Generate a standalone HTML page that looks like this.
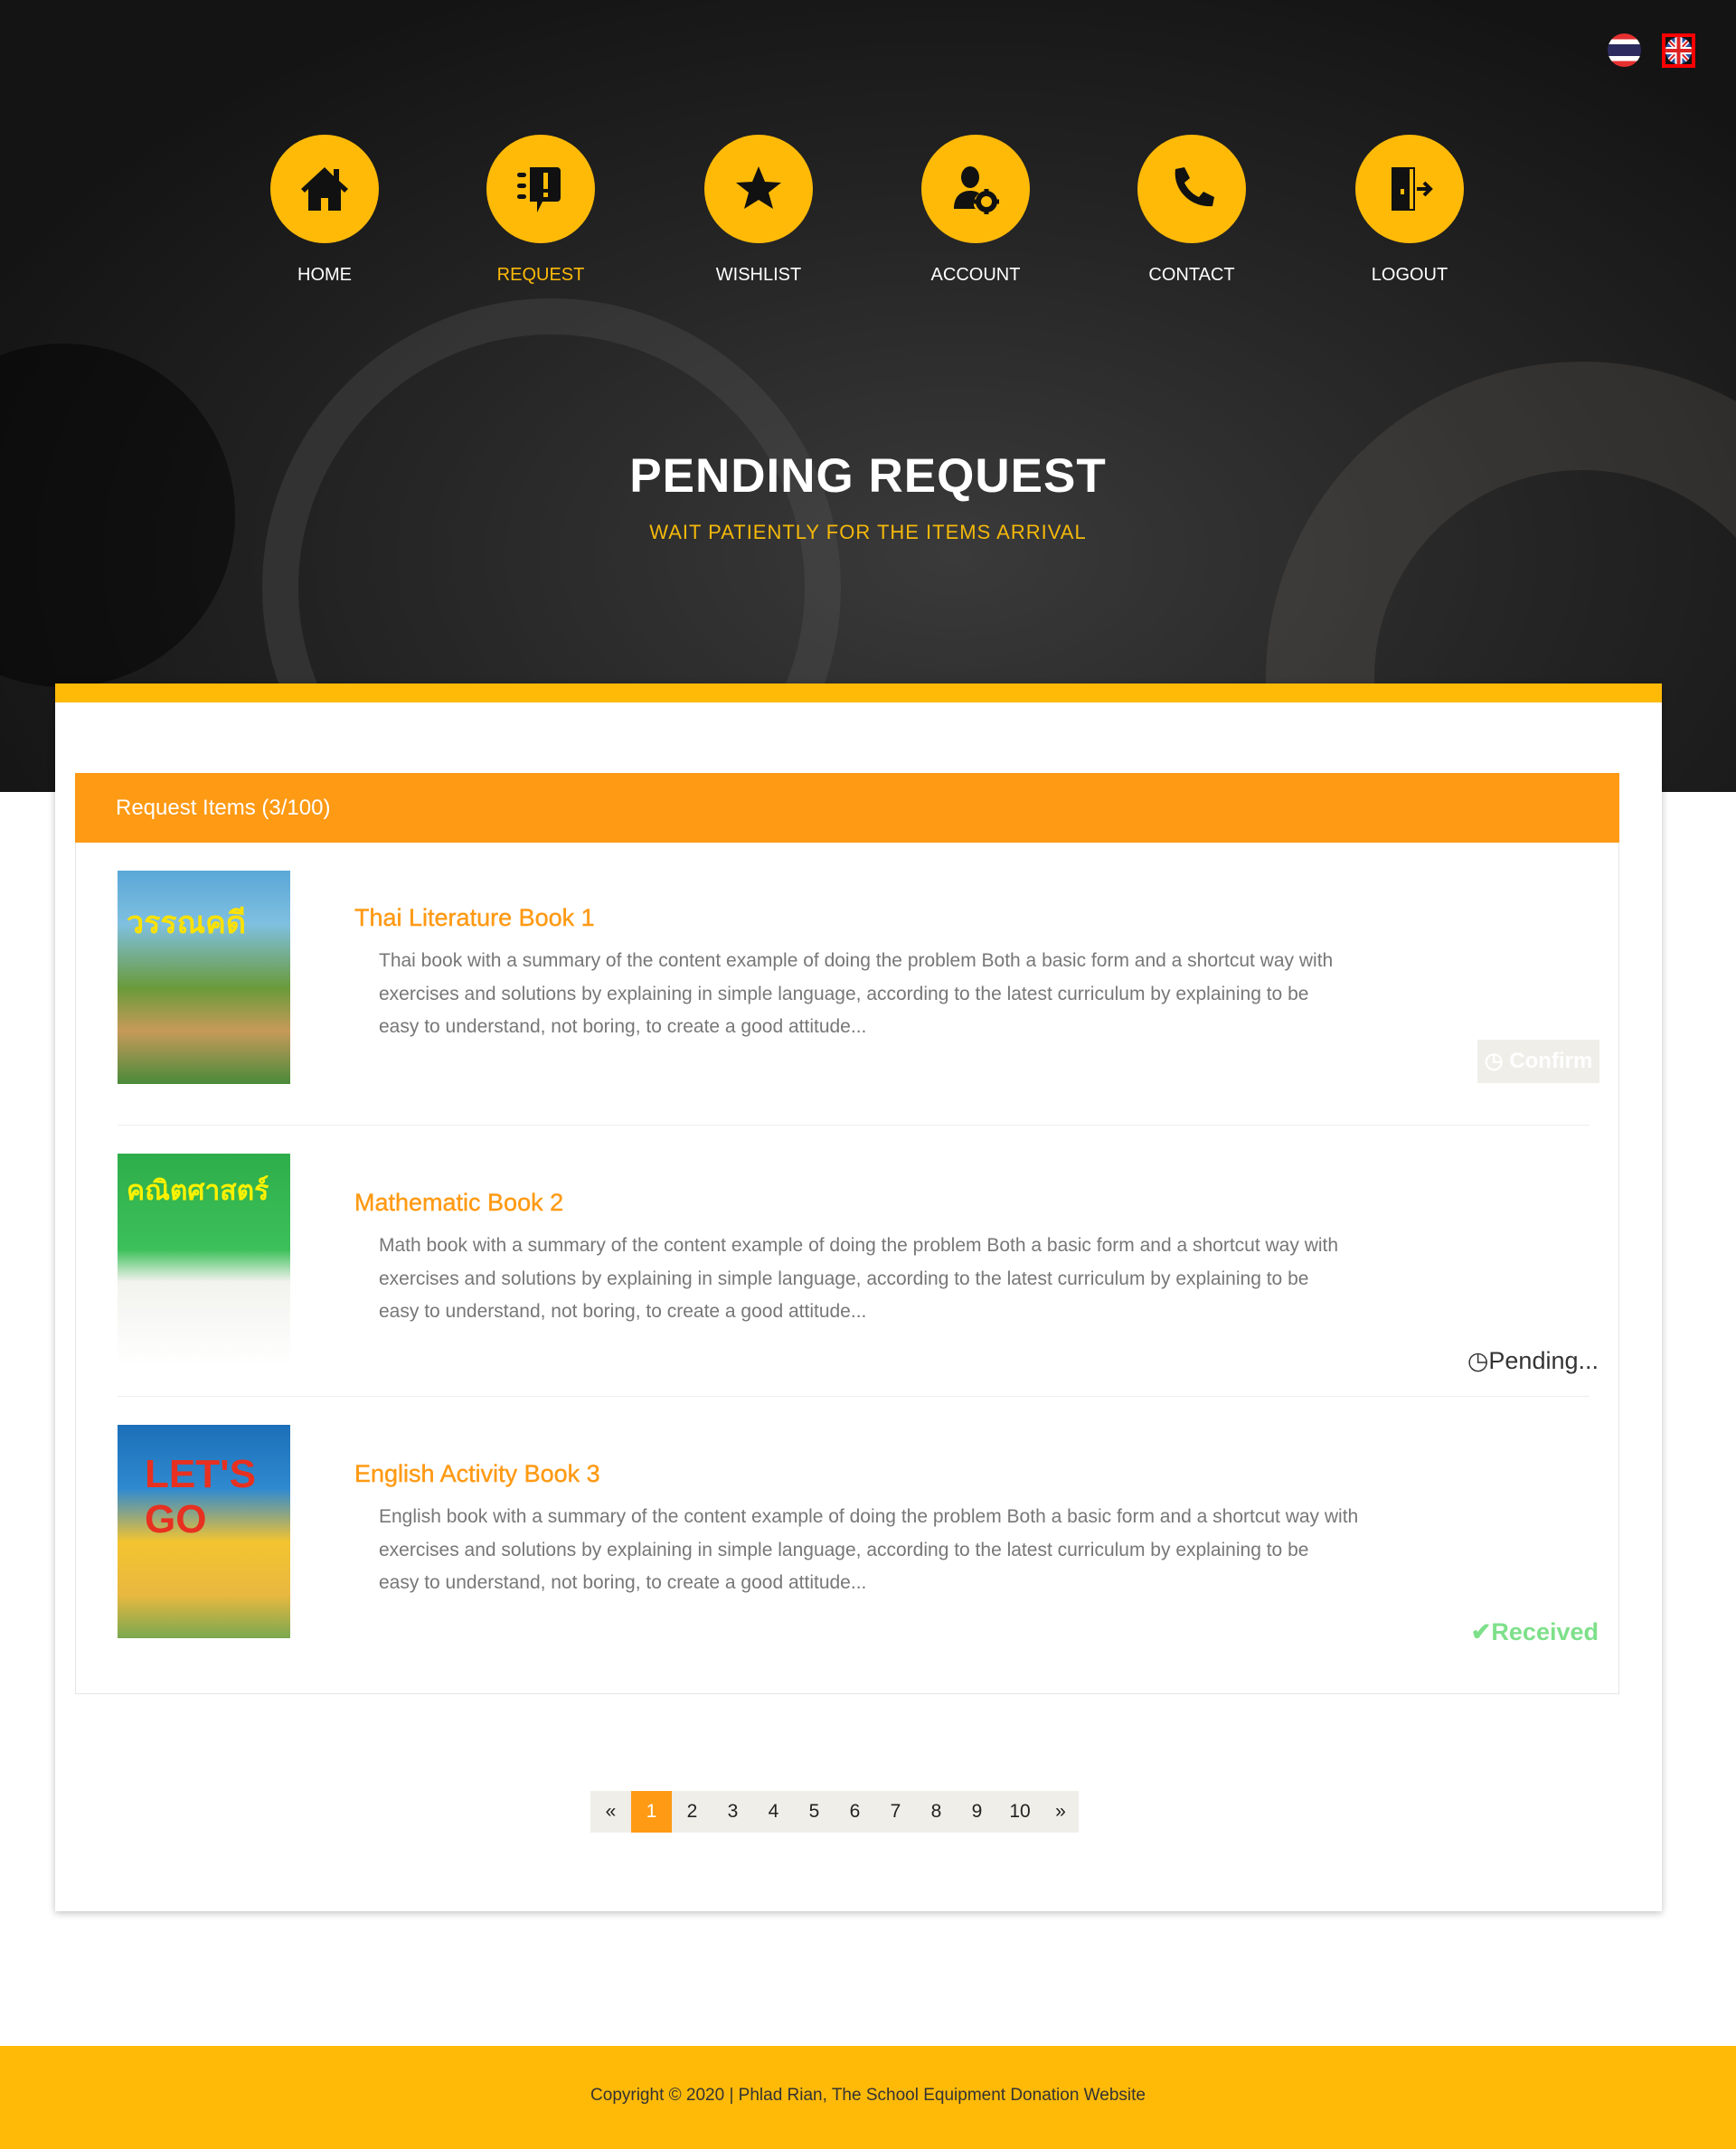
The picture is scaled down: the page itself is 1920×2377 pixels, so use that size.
<!DOCTYPE html>
<html><head><meta charset="utf-8">
<style>
*{margin:0;padding:0;box-sizing:border-box}
body{width:1920px;height:2377px;position:relative;background:#fff;font-family:"Liberation Sans",sans-serif;overflow:hidden}
.hero{position:absolute;left:0;top:0;width:1920px;height:876px;background:radial-gradient(ellipse at 55% 70%,#3a3a3a 0%,#262626 40%,#141414 80%);overflow:hidden}
.hero .deco1{position:absolute;left:290px;top:330px;width:640px;height:640px;border-radius:50%;border:40px solid rgba(90,90,90,.3)}
.hero .deco2{position:absolute;left:1400px;top:400px;width:700px;height:700px;border-radius:50%;border:120px solid rgba(120,110,100,.22)}
.hero .deco3{position:absolute;left:-120px;top:380px;width:380px;height:380px;border-radius:50%;background:rgba(0,0,0,.45)}
.flag{position:absolute;width:37px;height:37px;border-radius:50%;overflow:hidden}
.nav{position:absolute;top:149px;width:120px;text-align:center}
.nav .c{width:120px;height:120px;border-radius:50%;background:#ffba08;display:flex;align-items:center;justify-content:center}
.nav .l{position:absolute;top:144px;left:-40px;width:200px;text-align:center;color:#fff;font-size:20px}
h1{position:absolute;top:496px;left:0;width:1920px;text-align:center;color:#fff;font-size:53px;font-weight:bold;letter-spacing:1px}
.sub{position:absolute;top:576px;left:0;width:1920px;text-align:center;color:#f5b90a;font-size:22px;letter-spacing:1px}
.card{position:absolute;left:61px;top:756px;width:1777px;height:1358px;background:#fff;border-top:21px solid #ffba08;box-shadow:0 2px 8px rgba(0,0,0,.25)}
.panel{position:absolute;left:83px;top:855px;width:1708px;height:1019px;border:1px solid #e6e6e6}
.ph{height:77px;background:#ff9a14;color:#fff;font-size:24px;padding-left:45px;line-height:77px;margin:-1px -1px 0 -1px}
.item{position:absolute;left:46px;width:1630px}
.cover{position:absolute;left:0;top:0;width:191px;height:236px}
.t{position:absolute;left:262px;color:#ff9a14;font-size:27px;font-weight:500;-webkit-text-stroke:0.4px #ff9a14}
.d{position:absolute;left:289px;width:1070px;color:#777;font-size:21px;line-height:36.5px}
.sep{position:absolute;left:46px;width:1628px;height:1px;background:#eee}
.pg{position:absolute;left:653px;top:1981px;height:46px;width:540px;background:#efeee8;display:flex;font-size:21px;color:#222}
.pg span{width:45px;text-align:center;line-height:46px}
.foot{position:absolute;left:0;top:2263px;width:1920px;height:114px;background:#ffba08;text-align:center;line-height:110px;color:#333;font-size:19px}
</style></head><body>
<div class="hero"><div class="deco1"></div><div class="deco2"></div><div class="deco3"></div></div>
<div class="flag" style="left:1778px;top:37px;background:linear-gradient(#e63030 0 17%,#fff 17% 33%,#2c2a5e 33% 67%,#fff 67% 83%,#e63030 83%)"></div>
<div style="position:absolute;left:1838px;top:37px;width:37px;height:38px;border:4px solid #f00;background:#111"></div>
<div class="flag" style="left:1842px;top:41px;width:29px;height:30px;background:#2a4fa0">
<svg width="29" height="30" viewBox="0 0 29 30"><path d="M0 0L29 30M29 0L0 30" stroke="#fff" stroke-width="5"/><path d="M0 0L29 30M29 0L0 30" stroke="#d22" stroke-width="2"/><path d="M14.5 0V30M0 15H29" stroke="#fff" stroke-width="8"/><path d="M14.5 0V30M0 15H29" stroke="#d22" stroke-width="4"/></svg></div>

<div class="nav" style="left:299px"><div class="c"><svg width="56" height="56" viewBox="0 0 56 56"><path d="M28 4L2 28l4 4 4-4v24h14V38h8v14h14V28l4 4 4-4-10-9V6h-6v8z" fill="#111"/></svg></div><div class="l">HOME</div></div>
<div class="nav" style="left:538px"><div class="c"><svg width="56" height="56" viewBox="0 0 56 56"><rect x="2" y="10" width="10" height="5" rx="2.5" fill="#111"/><rect x="2" y="22" width="10" height="5" rx="2.5" fill="#111"/><rect x="2" y="34" width="10" height="5" rx="2.5" fill="#111"/><path d="M16 4h30a4 4 0 0 1 4 4v30a4 4 0 0 1-4 4H30l-6 12v-12h-8z" fill="#111"/><rect x="31" y="10" width="5" height="18" fill="#ffba08"/><rect x="31" y="32" width="5" height="5" fill="#ffba08"/></svg></div><div class="l" style="color:#ffba08">REQUEST</div></div>
<div class="nav" style="left:779px"><div class="c"><svg width="56" height="56" viewBox="0 0 56 56"><path d="M28 3l7 17 18 1-14 11 5 18-16-10-16 10 5-18L3 21l18-1z" fill="#111"/></svg></div><div class="l">WISHLIST</div></div>
<div class="nav" style="left:1019px"><div class="c"><svg width="56" height="56" viewBox="0 0 56 56"><ellipse cx="22" cy="15" rx="10" ry="12" fill="#111"/><path d="M4 50c0-14 8-20 18-20 4 0 8 1 10 3-6 4-8 12-4 17z" fill="#111"/><circle cx="40" cy="42" r="9" fill="none" stroke="#111" stroke-width="6"/><path d="M40 28v6M40 50v6M26 42h6M48 42h6" stroke="#111" stroke-width="5"/></svg></div><div class="l">ACCOUNT</div></div>
<div class="nav" style="left:1258px"><div class="c"><svg width="56" height="56" viewBox="0 0 56 56"><path d="M10 6l10-2 6 12-6 5c3 7 9 13 16 16l5-6 12 6-2 10c-24 2-44-18-41-41z" fill="#111"/></svg></div><div class="l">CONTACT</div></div>
<div class="nav" style="left:1499px"><div class="c"><svg width="56" height="56" viewBox="0 0 56 56"><path d="M8 4h26v48H8z" fill="#111"/><rect x="28" y="6" width="4" height="44" fill="#ffba08"/><rect x="18" y="28" width="4" height="6" fill="#ffba08"/><path d="M36 28h14M44 21l7 7-7 7" stroke="#111" stroke-width="4" fill="none"/></svg></div><div class="l">LOGOUT</div></div>

<h1>PENDING REQUEST</h1>
<div class="sub">WAIT PATIENTLY FOR THE ITEMS ARRIVAL</div>

<div class="card"></div>
<div class="panel">
<div class="ph">Request Items (3/100)</div>
<div class="item" style="top:107px">
<div class="cover" style="background:linear-gradient(180deg,#5aa7d8 0%,#7fc0e0 25%,#6a9a3a 55%,#c79a5a 75%,#4a8a3a 100%)"><div style="position:absolute;top:30px;left:10px;color:#ffe200;font-size:34px;font-weight:bold;font-family:'Liberation Sans','Noto Sans CJK SC',sans-serif">วรรณคดี</div></div>
<div class="t" style="top:37px">Thai Literature Book 1</div>
<div class="d" style="top:82px">Thai book with a summary of the content example of doing the problem Both a basic form and a shortcut way with exercises and solutions by explaining in simple language, according to the latest curriculum by explaining to be easy to understand, not boring, to create a good attitude...</div>
<div style="position:absolute;left:1504px;top:187px;width:135px;height:48px;background:#efeee8;color:#fff;font-size:24px;font-weight:bold;line-height:48px;text-align:center">◷ Confirm</div>
</div>
<div class="sep" style="top:388px"></div>
<div class="item" style="top:420px">
<div class="cover" style="background:linear-gradient(180deg,#2eae4a 0%,#3cc05a 45%,#f2f2ee 60%,#fff 100%)"><div style="position:absolute;top:18px;left:10px;color:#fff200;font-size:30px;font-weight:bold;font-family:'Liberation Sans','Noto Sans CJK SC',sans-serif">คณิตศาสตร์</div></div>
<div class="t" style="top:39px">Mathematic Book 2</div>
<div class="d" style="top:84px">Math book with a summary of the content example of doing the problem Both a basic form and a shortcut way with exercises and solutions by explaining in simple language, according to the latest curriculum by explaining to be easy to understand, not boring, to create a good attitude...</div>
<div style="position:absolute;right:-8px;top:214px;color:#333;font-size:27px">◷Pending...</div>
</div>
<div class="sep" style="top:688px"></div>
<div class="item" style="top:720px">
<div class="cover" style="background:linear-gradient(180deg,#1c6fb8 0%,#2f8ad0 30%,#f4c430 55%,#e7b840 80%,#7aa850 100%)"><div style="position:absolute;top:30px;left:30px;color:#e83020;font-size:44px;font-weight:bold">LET'S<br>GO</div></div>
<div class="t" style="top:39px">English Activity Book 3</div>
<div class="d" style="top:84px;width:1100px">English book with a summary of the content example of doing the problem Both a basic form and a shortcut way with exercises and solutions by explaining in simple language, according to the latest curriculum by explaining to be<br>easy to understand, not boring, to create a good attitude...</div>
<div style="position:absolute;right:-8px;top:214px;color:#7ee08a;font-size:27px;font-weight:bold">✔Received</div>
</div>
</div>

<div class="pg"><span>«</span><span style="background:#ff9a14;color:#fff">1</span><span>2</span><span>3</span><span>4</span><span>5</span><span>6</span><span>7</span><span>8</span><span>9</span><span style="width:50px">10</span><span style="width:40px">»</span></div>

<div class="foot">Copyright © 2020 | Phlad Rian, The School Equipment Donation Website</div>
</body></html>
